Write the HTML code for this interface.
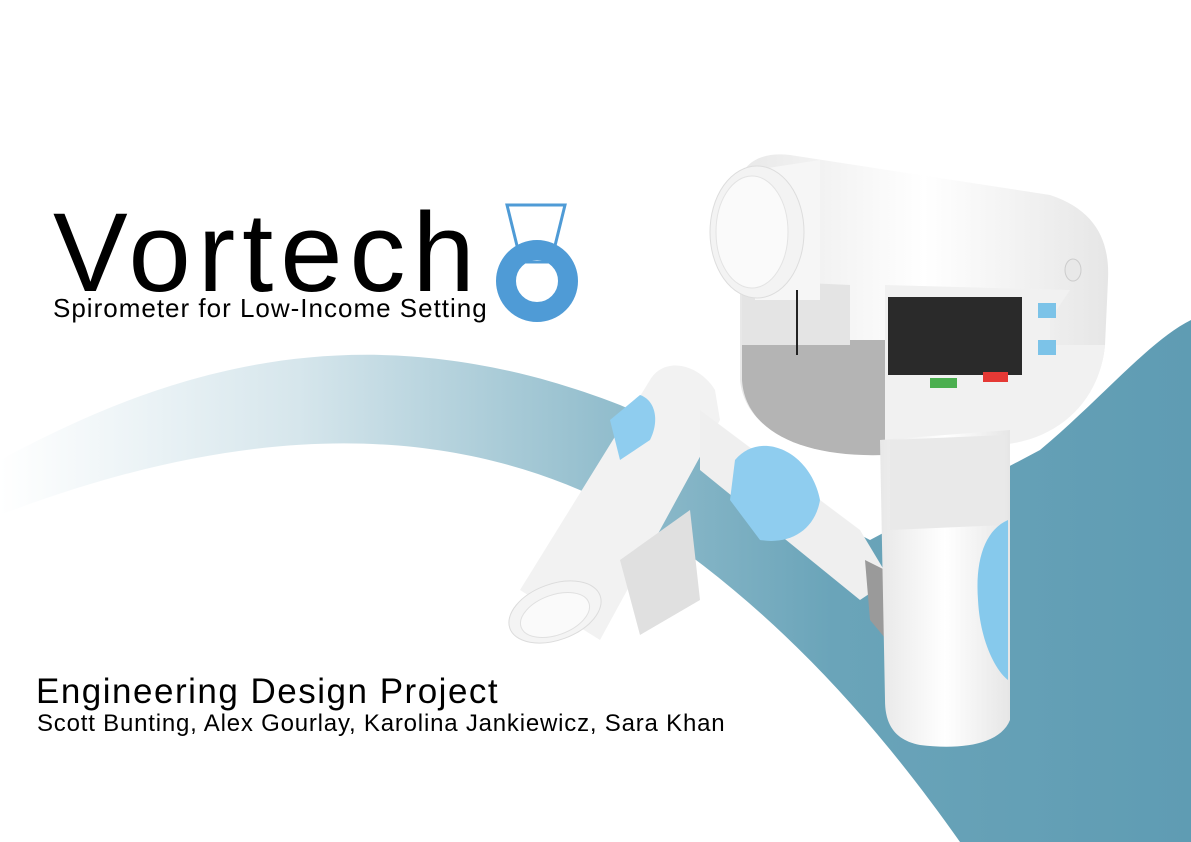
<!DOCTYPE html>
<html><head><meta charset="utf-8"><style>
html,body{margin:0;padding:0;background:#fff;}
body{width:1191px;height:842px;position:relative;overflow:hidden;font-family:"Liberation Sans",sans-serif;}
svg{position:absolute;left:0;top:0;}
.t{position:absolute;color:#000;white-space:nowrap;}
</style></head><body>
<svg width="1191" height="842" viewBox="0 0 1191 842">
<defs>
<linearGradient id="g" x1="0" y1="0" x2="1" y2="0">
<stop offset="0" stop-color="#ffffff"/>
<stop offset="0.25" stop-color="#d6e6ec"/>
<stop offset="0.5" stop-color="#95bfce"/>
<stop offset="0.7" stop-color="#6aa4b9"/>
<stop offset="1" stop-color="#5f9cb3"/>
</linearGradient>
<linearGradient id="w" x1="0" y1="0" x2="1" y2="0">
<stop offset="0" stop-color="#e8e8e8"/><stop offset="0.5" stop-color="#ffffff"/><stop offset="1" stop-color="#e6e6e6"/>
</linearGradient>
</defs>
<path d="M0,460 C150,380 350,300 620,405 C750,460 830,520 870,540 L1040,450 C1100,400 1150,340 1191,320 L1191,842 L960,842 C860,700 760,600 640,520 C500,440 300,400 0,515 Z" fill="url(#g)"/>
<g>
<path d="M520,590 L650,380 C665,355 700,365 715,390 L720,420 L600,640 Z" fill="#f2f2f2"/>
<path d="M610,420 L640,395 C655,400 660,420 650,440 L620,460 Z" fill="#8fcdef"/>
<path d="M700,410 L860,530 L890,580 L860,600 L700,470 Z" fill="#efefef"/>
<path d="M735,460 C760,430 810,450 820,500 C815,530 790,545 760,540 L730,500 Z" fill="#8fcdef"/>
<path d="M865,560 L895,575 L895,650 L870,620 Z" fill="#9a9a9a"/>
<path d="M620,560 L690,510 L700,600 L640,635 Z" fill="#e0e0e0"/>
<ellipse cx="555" cy="612" rx="48" ry="28" transform="rotate(-20 555 612)" fill="#f4f4f4" stroke="#dcdcdc"/>
<ellipse cx="555" cy="615" rx="36" ry="20" transform="rotate(-20 555 615)" fill="#fafafa" stroke="#e0e0e0"/>
</g>
<path d="M790,155 L1050,195 C1095,210 1110,240 1108,280 L1105,345 C1100,400 1060,430 1000,440 L880,450 C800,455 745,430 740,380 L740,180 C745,160 765,152 790,155 Z" fill="url(#w)"/>
<path d="M742,340 L885,340 L885,455 C800,458 745,430 742,380 Z" fill="#b4b4b4"/>
<path d="M742,280 L850,285 L850,345 L742,345 Z" fill="#e4e4e4"/>
<path d="M885,285 L1070,290 L1050,320 L1050,345 L1105,345 C1100,400 1060,440 1000,445 L885,455 Z" fill="#f1f1f1"/>
<rect x="888" y="297" width="134" height="78" fill="#2a2a2a"/>
<rect x="1038" y="303" width="18" height="15" fill="#7cc3e8"/>
<rect x="1038" y="340" width="18" height="15" fill="#7cc3e8"/>
<rect x="930" y="378" width="27" height="10" fill="#4caf50"/>
<rect x="983" y="372" width="25" height="10" fill="#e53935"/>
<ellipse cx="1073" cy="270" rx="8" ry="11" fill="#e8e8e8" stroke="#ccc"/>
<path d="M755,170 L820,160 L820,300 L755,300 Z" fill="#f6f6f6"/>
<ellipse cx="757" cy="232" rx="47" ry="66" fill="#f3f3f3" stroke="#ddd"/>
<ellipse cx="752" cy="232" rx="36" ry="56" fill="#fafafa" stroke="#e3e3e3"/>
<line x1="797" y1="290" x2="797" y2="355" stroke="#222" stroke-width="2"/>
<path d="M880,440 L1010,430 L1010,720 C1000,745 960,750 920,745 C895,740 885,725 885,700 Z" fill="url(#w)"/>
<path d="M890,440 L1005,435 L1005,525 L890,530 Z" fill="#e9e9e9"/>
<path d="M1008,520 C985,530 975,560 978,600 C980,640 995,670 1008,680 Z" fill="#86c9ec"/>
<path d="M507,205 L565,205 L551,262 L521,262 Z" fill="none" stroke="#4f9bd6" stroke-width="3"/>
<circle cx="537" cy="281" r="31" fill="none" stroke="#4f9bd6" stroke-width="20"/>
</svg>
<div class="t" style="left:53px;top:183px;font-size:112px;letter-spacing:7px;line-height:140px;">Vortech</div>
<div class="t" style="left:53px;top:293px;font-size:26px;letter-spacing:1px;line-height:30px;">Spirometer for Low-Income Setting</div>
<div class="t" style="left:36px;top:672px;font-size:35px;letter-spacing:1.5px;line-height:40px;">Engineering Design Project</div>
<div class="t" style="left:37px;top:710px;font-size:24px;letter-spacing:0.8px;line-height:28px;">Scott Bunting, Alex Gourlay, Karolina Jankiewicz, Sara Khan</div>
</body></html>
